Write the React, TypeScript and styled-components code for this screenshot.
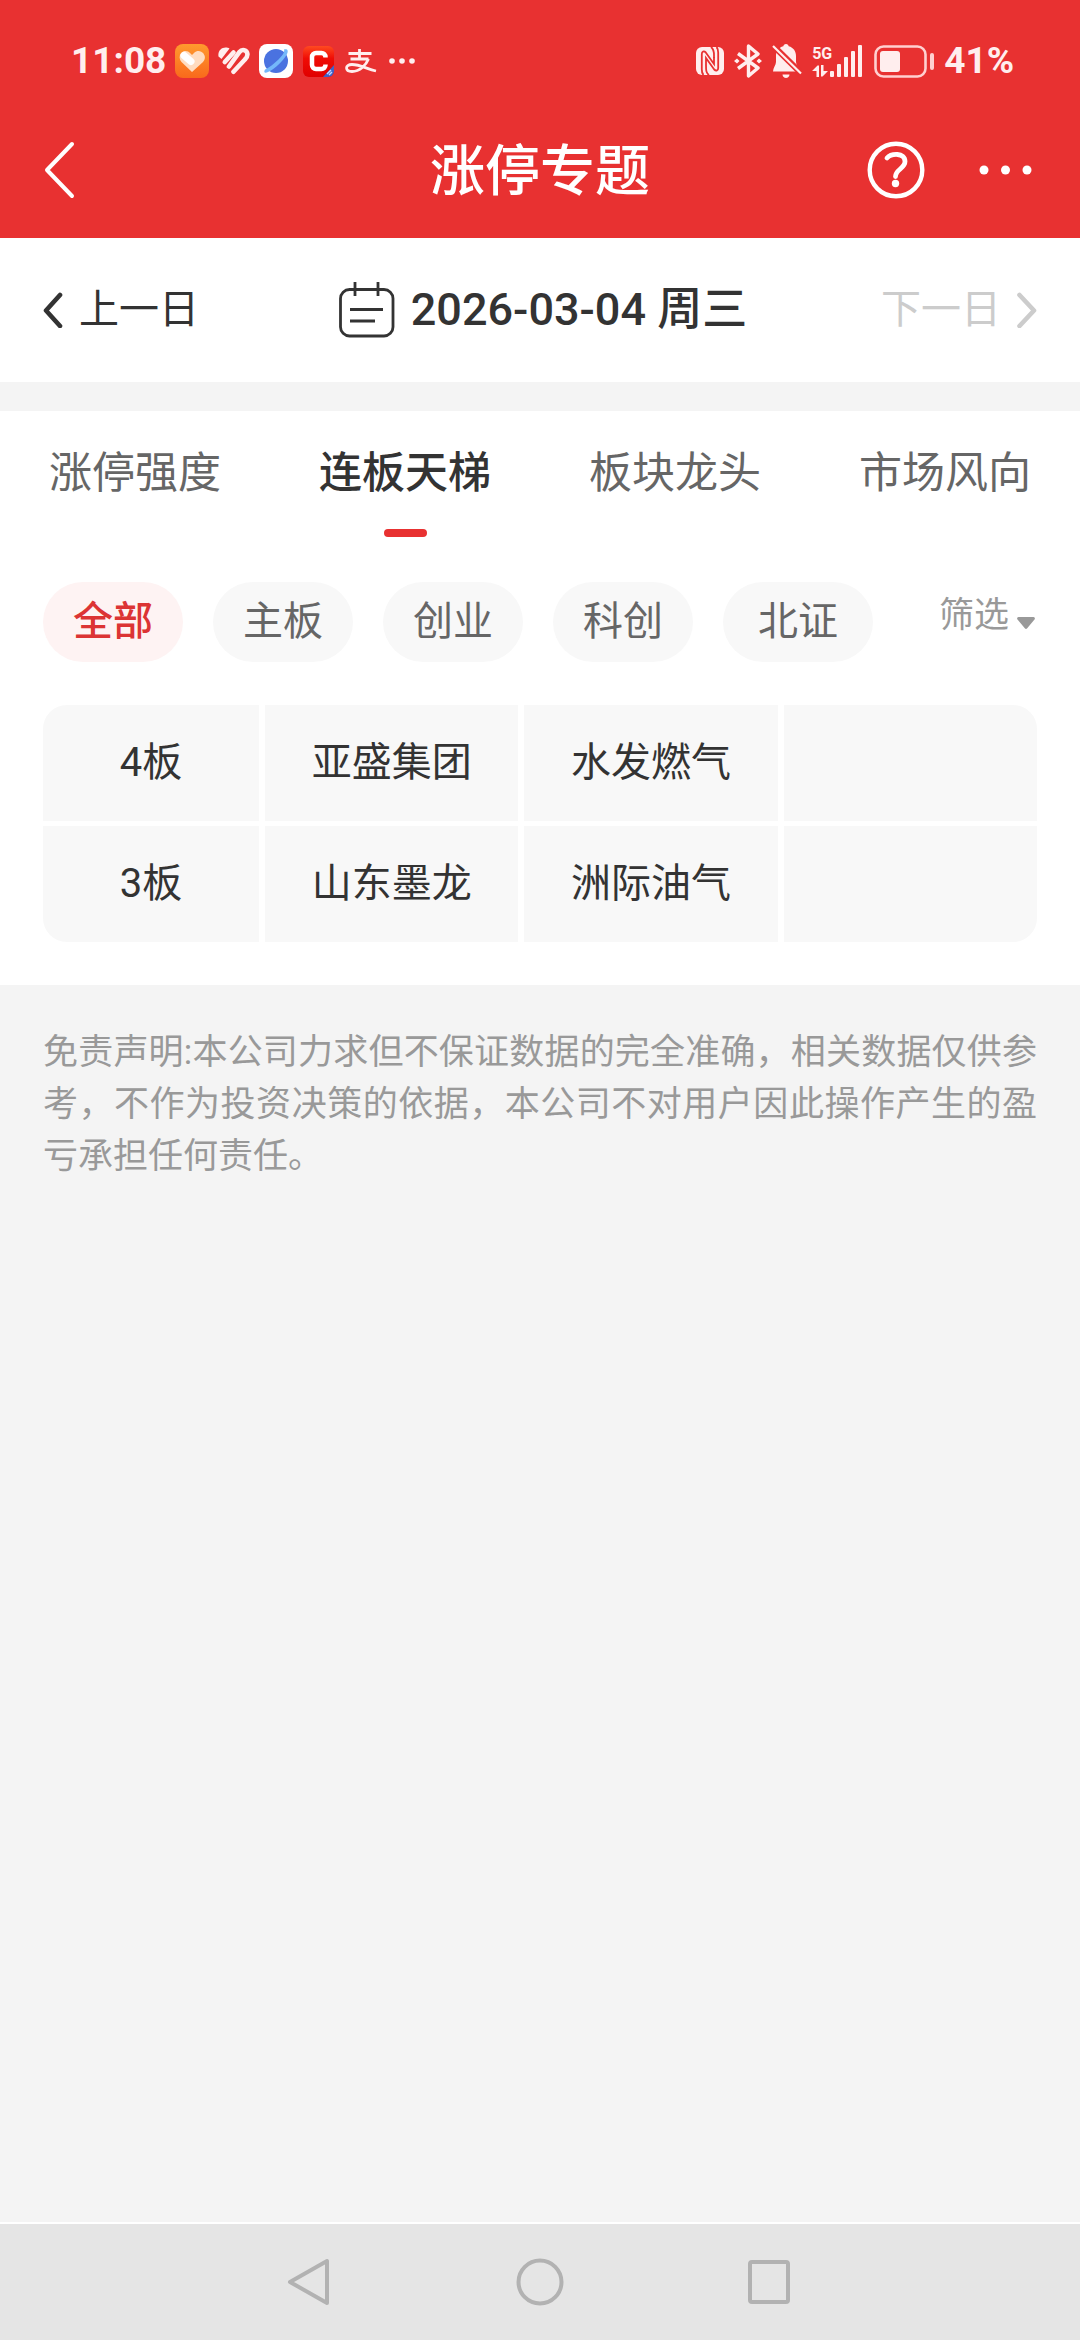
import React, { useState } from "react";
import styled, { createGlobalStyle } from "styled-components";

const RED = "#e83131";
const INK = "#333333";
const FONT = `Roboto, "Noto Sans CJK SC", sans-serif`;

const GlobalStyle = createGlobalStyle`
  *, *::before, *::after { box-sizing: border-box; }
  body { margin: 0; background: #f4f4f4; font-family: ${FONT}; color: ${INK}; }
  button { margin: 0; padding: 0; border: 0; background: none; color: inherit; font: inherit; cursor: pointer; }
  svg { display: block; flex: none; }
`;

const Page = styled.div`
  display: flex;
  flex-direction: column;
  min-height: 100vh;
`;

const Top = styled.header`
  background: ${RED};
  color: #ffffff;
`;

const StatusBar = styled.div`
  display: flex;
  align-items: center;
  justify-content: space-between;
  height: 102px;
  padding: 20px 66px 0 71px;
  color: #ffeeee;
`;

const StatusGroup = styled.div<{ $gap: number }>`
  display: flex;
  align-items: center;
  gap: ${(p) => p.$gap}px;
`;

const StatusText = styled.span`
  font-size: 37px;
  line-height: 40px;
  font-weight: 700;
`;

const TitleBar = styled.div`
  display: grid;
  grid-template-columns: 1fr auto 1fr;
  align-items: center;
  height: 136px;
  padding: 0 43px;
`;

const Title = styled.h1`
  margin: 0;
  padding-top: 2px;
  font-size: 55px;
  line-height: 64px;
  font-weight: 500;
`;

const Actions = styled.div`
  display: flex;
  align-items: center;
  justify-content: flex-end;
  gap: 54px;
`;

const DateBar = styled.nav`
  display: grid;
  grid-template-columns: 1fr auto 1fr;
  align-items: center;
  height: 144px;
  padding: 0 43px;
  background: #ffffff;
`;

const DayButton = styled.button<{ $end?: boolean }>`
  display: flex;
  align-items: center;
  justify-self: ${(p) => (p.$end ? "end" : "start")};
  gap: 16px;
  font-size: 40px;
  line-height: 48px;
  &:disabled { color: #cccccc; cursor: default; }
`;

const DateButton = styled.button`
  display: flex;
  align-items: center;
  gap: 16px;
  padding-left: 6px;
  font-size: 45px;
  line-height: 56px;
  font-weight: 500;
`;

const Panel = styled.main`
  margin-top: 29px;
  padding: 0 43px 43px;
  background: #ffffff;
`;

const Tabs = styled.div`
  display: flex;
  justify-content: space-between;
  padding: 34px 6px 0;
`;

const Tab = styled.button<{ $active: boolean }>`
  display: flex;
  flex-direction: column;
  align-items: center;
  gap: 28px;
  font-size: 43px;
  line-height: 56px;
  font-weight: ${(p) => (p.$active ? 500 : 400)};
  color: ${(p) => (p.$active ? INK : "#666666")};
  &::after {
    content: "";
    width: 43px;
    height: 8px;
    border-radius: 4px;
    background: ${(p) => (p.$active ? RED : "transparent")};
  }
`;

const Filters = styled.div`
  display: flex;
  align-items: center;
  justify-content: space-between;
  margin-top: 45px;
`;

const Pills = styled.div`
  display: flex;
  gap: 30px;
`;

const Pill = styled.button<{ $active: boolean }>`
  height: 80px;
  padding: 0 30px;
  border-radius: 40px;
  font-size: 40px;
  line-height: 48px;
  font-weight: ${(p) => (p.$active ? 500 : 400)};
  color: ${(p) => (p.$active ? "#dc3434" : "#666666")};
  background: ${(p) => (p.$active ? "#fef3f3" : "#f8f8f8")};
  &:last-child { padding: 0 35px; }
`;

const FilterButton = styled.button`
  display: flex;
  align-items: center;
  gap: 8px;
  padding: 0 2px 12px 0;
  font-size: 35px;
  line-height: 40px;
  color: #999999;
  svg { margin-top: 14px; }
`;

const Ladder = styled.table`
  width: calc(100% + 12px);
  margin: 38px -6px -5px;
  border-spacing: 6px 5px;
  table-layout: fixed;
  font-size: 40px;
  line-height: 48px;
`;

const cell = `
  height: 116px;
  padding: 0;
  background: #f8f8f8;
  font-weight: 400;
  text-align: center;
`;

const Level = styled.th`
  ${cell}
  width: 216px;
  tr:first-child > & { border-top-left-radius: 24px; }
  tr:last-child > & { border-bottom-left-radius: 24px; }
`;

const Stock = styled.td`
  ${cell}
  tr:first-child > &:last-child { border-top-right-radius: 24px; }
  tr:last-child > &:last-child { border-bottom-right-radius: 24px; }
`;

const Disclaimer = styled.p`
  flex: 1;
  margin: 0;
  padding: 42px 43px;
  font-size: 35px;
  line-height: 52px;
  text-align: justify;
  color: #999999;
`;

const SystemNav = styled.footer`
  display: flex;
  align-items: center;
  justify-content: center;
  gap: 181px;
  height: 118px;
  border-top: 2px solid #ffffff;
  background: #e5e5e5;
`;

const HeartApp = () => (
  <svg width="34" height="34" viewBox="0 0 34 34">
    <defs>
      <linearGradient id="orange" x1="0" y1="0" x2="0" y2="1">
        <stop offset="0" stopColor="#ff9a2e" />
        <stop offset="1" stopColor="#f9691c" />
      </linearGradient>
    </defs>
    <rect width="34" height="34" rx="8" fill="url(#orange)" />
    <path d="M17 28 6.500 18A7 7 0 0 1 6 9c3-3 7-2.500 9 0l2 2 2-2c3-3 7-2.500 9.500.5a7 7 0 0 1-.5 8.500z" fill="#ffdcc0" />
    <path d="M9 11.500l7 6" stroke="#ffffff" strokeWidth="7" strokeLinecap="round" />
  </svg>
);

const StripedHeart = () => (
  <svg width="32" height="28" viewBox="0 0 32 28" fill="none" stroke="#ffeeee" strokeWidth="4.600" strokeLinecap="round">
    <path d="M0.500 9.500C-.5 4 3.500.5 7.500.5c1.500 0 3 .3 4 1L3.500 12z" fill="#ffeeee" stroke="none" />
    <path d="M6.800 15 15.500 5.500" />
    <path d="M11 19.500 21.500 5C24 1.800 29 2.700 29.400 7c.2 2.500-1 4-2.500 5.500L15.500 24.800" />
  </svg>
);

const PlanetApp = () => (
  <svg width="34" height="34" viewBox="0 0 34 34">
    <rect width="34" height="34" rx="8" fill="#ffffff" />
    <circle cx="17" cy="17" r="12" fill="#4a72e0" />
    <path d="M6 25.500C3.500 30 8 29 12 26.500 19 22 26 14.500 28 10c2-4.500-.5-5.500-3-4.500 1.500 3-4 9-9.500 13.500C12 22 8.500 24.500 6 25.500z" fill="#74b8fa" />
  </svg>
);

const CApp = () => (
  <svg width="33" height="31" viewBox="-1 0 33 31">
    <defs>
      <linearGradient id="redTile" x1="0" y1="0" x2="0" y2="1">
        <stop offset="0" stopColor="#ff4a20" />
        <stop offset="0.4" stopColor="#f00c05" />
        <stop offset="1" stopColor="#e00000" />
      </linearGradient>
    </defs>
    <rect width="31" height="31" rx="6" fill="url(#redTile)" />
    <path d="M22.500 11.500V11a4 4 0 0 0-4-4H13a4 4 0 0 0-4 4v8a4 4 0 0 0 4 4h5.500a4 4 0 0 0 4-4v-.5" fill="none" stroke="#ffffff" strokeWidth="4.500" />
    <path d="M20 31 31 19v6a6 6 0 0 1-6 6z" fill="#3f62c8" />
    <path d="M24 28l4-4M26 29l3-3" stroke="#c8d6ff" strokeWidth="1.400" />
  </svg>
);

const PayMark = () => (
  <svg width="36" height="24" viewBox="-1 0 36 24" fill="none" stroke="#ffeeee" strokeWidth="2.800">
    <path d="M3.500 4.500h23M14.500 0v10M5.500 10h18" />
    <path d="M23.500 10C21 16 15 22.500 7 22.500c-7 0-7.500-7 0-7 8 0 15 4.500 24 6.500" />
  </svg>
);

const SmallDots = () => (
  <svg width="26" height="6" viewBox="0 0 26 6" fill="#ffeeee">
    <circle cx="3" cy="3" r="2.800" />
    <circle cx="13" cy="3" r="2.800" />
    <circle cx="23" cy="3" r="2.800" />
  </svg>
);

const NfcIcon = () => (
  <svg width="28" height="28" viewBox="0 0 28 28">
    <rect width="28" height="28" rx="6" fill="#ffeeee" />
    <path d="M7.500 28C5.500 26 5.800 24 5.800 21V7c0-2.500 2-3.500 4-1.500L18 17V10" fill="none" stroke={RED} strokeWidth="1.800" />
    <path d="M20.500 0c2 2 1.700 4 1.700 7v14c0 2.500-2 3.500-4 1.500L10 11v7c0 5 0 8 3 10" fill="none" stroke={RED} strokeWidth="1.800" />
    <path d="M18 11V8c0-4-.5-6-3-8" fill="none" stroke={RED} strokeWidth="1.800" />
  </svg>
);

const BluetoothIcon = () => (
  <svg width="28" height="34" viewBox="0 0 28 34" fill="none" stroke="#ffeeee" strokeWidth="3.400" strokeLinejoin="round">
    <path d="M4 9.500 24 24l-9.500 8V2L24 10 4 24.500" />
    <path d="M0 17 3 14.500 5.500 17 3 19.500zM28 17l-3-2.500L22.500 17l2.500 2.500z" fill="#ffeeee" stroke="none" />
  </svg>
);

const MutedIcon = () => (
  <svg width="30" height="34" viewBox="0 0 30 34">
    <path d="M14 0c1.600 0 2.500 1 2.700 2.300C21.500 3.500 24 7.500 24 12v6c0 3 3 6 3 9.500H1C1 24 4 21 4 18v-6c0-4.500 2.500-8.500 7.300-9.700C11.500 1 12.400 0 14 0z" fill="#ffeeee" />
    <path d="M10.500 30.500h7c0 4.500-7 4.500-7 0z" fill="#ffeeee" />
    <path d="M1 1.500 29 29" stroke={RED} strokeWidth="6" />
    <path d="M1 2 29 29.500" stroke="#ffeeee" strokeWidth="2.200" />
  </svg>
);

const Signal = styled.div`
  display: flex;
  align-items: flex-end;
  padding-right: 2px;
`;

const Network = styled.div`
  display: flex;
  flex-direction: column;
  align-items: flex-start;
  gap: 4px;
  width: 18px;
  font-size: 16px;
  line-height: 14px;
  font-weight: 700;
`;

const Arrows = () => (
  <svg width="16" height="12" viewBox="0 0 16 12" fill="#ffeeee">
    <path d="M0 6 5.500.5H7V12H4.500V6zM16 6l-5.500 5.500H9V0h2.500v6z" />
  </svg>
);

const Bars = () => (
  <svg width="32" height="32" viewBox="0 0 32 32" fill="#ffeeee">
    <rect x="0" y="26" width="4" height="6" rx="1" />
    <rect x="7" y="19" width="4" height="13" rx="1" />
    <rect x="14" y="12" width="4" height="20" rx="1" />
    <rect x="21" y="6" width="4" height="26" rx="1" />
    <rect x="28" y="0" width="4" height="32" rx="1" />
  </svg>
);

const BatteryIcon = () => (
  <svg width="60" height="33" viewBox="0 0 60 33">
    <rect x="1.500" y="1.500" width="50" height="30" rx="8" fill="none" stroke="#ffd0d0" strokeWidth="2.600" />
    <rect x="6" y="6" width="20" height="21" rx="3" fill="#ffeeee" />
    <rect x="56" y="8" width="4" height="17" rx="2" fill="#ffd0d0" />
  </svg>
);

const BackIcon = () => (
  <svg width="34" height="58" viewBox="0 0 34 58" fill="none" stroke="#ffffff" strokeWidth="4" strokeLinecap="round" strokeLinejoin="round">
    <path d="M29 3 4 29l25 26" />
  </svg>
);

const HelpIcon = () => (
  <svg width="58" height="58" viewBox="0 0 58 58" fill="none" stroke="#ffffff" strokeWidth="4.400" strokeLinecap="round">
    <circle cx="29" cy="29" r="26.300" />
    <path d="M20 17c4-4.500 18-6 18 3.500 0 7-9.500 8-9.500 15" strokeWidth="4.800" />
    <circle cx="28.500" cy="42.500" r="3.700" fill="#ffffff" stroke="none" />
  </svg>
);

const MoreIcon = () => (
  <svg width="58" height="10" viewBox="0 0 58 10" fill="#ffffff">
    <circle cx="5" cy="5" r="4.500" />
    <circle cx="26.500" cy="5" r="4.500" />
    <circle cx="48" cy="5" r="4.500" />
  </svg>
);

const Chevron = ({ next }: { next?: boolean }) => (
  <svg width="20" height="36" viewBox="0 0 20 36" fill="none" stroke="currentColor" strokeWidth="4.600" strokeLinecap="round" strokeLinejoin="round">
    <path d={next ? "M2.500 3 17 18.500 2.500 34" : "M17 3 3 18.500 17 34"} />
  </svg>
);

const CalendarIcon = () => (
  <svg width="56" height="56" viewBox="0 0 56 56" fill="none" stroke={INK} strokeWidth="2.800">
    <rect x="1.500" y="7.500" width="52.500" height="46.500" rx="9" />
    <path d="M16 0v14M39 0v14M11 27.500h33M11 39h25" />
  </svg>
);

const Caret = () => (
  <svg width="18" height="12" viewBox="0 0 18 12" fill="#999999">
    <path d="M1.500 0h15a1.500 1.500 0 0 1 1.200 2.200L10.200 11.200a1.500 1.500 0 0 1-2.400 0L.3 2.200A1.500 1.500 0 0 1 1.500 0z" />
  </svg>
);

const tabs = ["涨停强度", "连板天梯", "板块龙头", "市场风向"];
const boards = ["全部", "主板", "创业", "科创", "北证"];
const ladder = [
  { level: "4板", stocks: ["亚盛集团", "水发燃气", ""] },
  { level: "3板", stocks: ["山东墨龙", "洲际油气", ""] },
];

export default function App() {
  const [tab, setTab] = useState("连板天梯");
  const [board, setBoard] = useState("全部");

  return (
    <>
      <GlobalStyle />
      <Page>
        <Top>
          <StatusBar>
            <StatusGroup $gap={9}>
              <StatusText>11:08</StatusText>
              <HeartApp />
              <StripedHeart />
              <PlanetApp />
              <CApp />
              <PayMark />
              <SmallDots />
            </StatusGroup>
            <StatusGroup $gap={10}>
              <NfcIcon />
              <BluetoothIcon />
              <MutedIcon />
              <Signal>
                <Network>
                  5G
                  <Arrows />
                </Network>
                <Bars />
              </Signal>
              <BatteryIcon />
              <StatusText>41%</StatusText>
            </StatusGroup>
          </StatusBar>
          <TitleBar>
            <button aria-label="返回"><BackIcon /></button>
            <Title>涨停专题</Title>
            <Actions>
              <button aria-label="帮助"><HelpIcon /></button>
              <button aria-label="更多"><MoreIcon /></button>
            </Actions>
          </TitleBar>
        </Top>

        <DateBar>
          <DayButton><Chevron />上一日</DayButton>
          <DateButton><CalendarIcon />2026-03-04 周三</DateButton>
          <DayButton $end disabled>下一日<Chevron next /></DayButton>
        </DateBar>

        <Panel>
          <Tabs role="tablist">
            {tabs.map((name) => (
              <Tab key={name} role="tab" aria-selected={name === tab} $active={name === tab} onClick={() => setTab(name)}>
                {name}
              </Tab>
            ))}
          </Tabs>
          <Filters>
            <Pills>
              {boards.map((name) => (
                <Pill key={name} aria-pressed={name === board} $active={name === board} onClick={() => setBoard(name)}>
                  {name}
                </Pill>
              ))}
            </Pills>
            <FilterButton>筛选<Caret /></FilterButton>
          </Filters>
          <Ladder>
            <tbody>
              {ladder.map((row) => (
                <tr key={row.level}>
                  <Level scope="row">{row.level}</Level>
                  {row.stocks.map((stock, i) => (
                    <Stock key={i}>{stock}</Stock>
                  ))}
                </tr>
              ))}
            </tbody>
          </Ladder>
        </Panel>

        <Disclaimer>
          免责声明:本公司力求但不保证数据的完全准确，相关数据仅供参考，不作为投资决策的依据，本公司不对用户因此操作产生的盈亏承担任何责任。
        </Disclaimer>

        <SystemNav>
          <button aria-label="后退">
            <svg width="48" height="48" viewBox="0 0 48 48" fill="none" stroke="#b2b2b2" strokeWidth="4" strokeLinejoin="round">
              <path d="M40 3v42L3 24z" />
            </svg>
          </button>
          <button aria-label="主屏幕">
            <svg width="48" height="48" viewBox="0 0 48 48" fill="none" stroke="#b2b2b2" strokeWidth="4">
              <circle cx="24" cy="24" r="21.500" />
            </svg>
          </button>
          <button aria-label="最近任务">
            <svg width="48" height="48" viewBox="0 0 48 48" fill="none" stroke="#b2b2b2" strokeWidth="4">
              <rect x="5" y="4" width="38" height="40" rx="2" />
            </svg>
          </button>
        </SystemNav>
      </Page>
    </>
  );
}
